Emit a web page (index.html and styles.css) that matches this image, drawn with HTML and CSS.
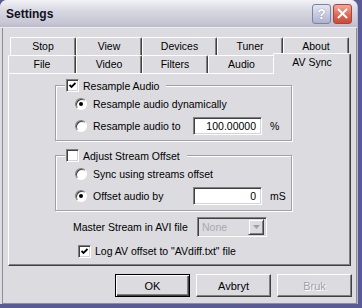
FILE: index.html
```html
<!DOCTYPE html>
<html lang="en">
<head>
    <meta charset="UTF-8">
    <title>Settings</title>
    <link rel="stylesheet" href="styles.css">
</head>
<body>
<div class="window">
    <div class="titlebar">
        <span class="title">Settings</span>
        <span class="caption-btn help">?</span>
        <span class="caption-btn close">
            <svg width="11" height="11" viewBox="0 0 11 11"><path d="M1.5 1.5 L9.5 9.5 M9.5 1.5 L1.5 9.5" stroke="#fff" stroke-width="2" stroke-linecap="round"/></svg>
        </span>
    </div>
    <div class="client">
        <div class="tabstrip">
            <div class="tab-row back">
                <div class="tab">Stop</div>
                <div class="tab">View</div>
                <div class="tab wide">Devices</div>
                <div class="tab">Tuner</div>
                <div class="tab">About</div>
            </div>
            <div class="tab-row front">
                <div class="tab first">File</div>
                <div class="tab">Video</div>
                <div class="tab">Filters</div>
                <div class="tab audio">Audio</div>
                <div class="tab selected">AV Sync</div>
            </div>
            <div class="panel">
                <div class="group">
                    <div class="legend">
                        <span class="check checked"><svg width="7" height="7" viewBox="0 0 7 7"><path d="M0.5 3 L2.5 5 L6.5 1" stroke="#000" stroke-width="1.8" fill="none"/></svg></span>
                        <span>Resample Audio</span>
                    </div>
                    <div class="row">
                        <span class="radio on"></span>
                        <span>Resample audio dynamically</span>
                    </div>
                    <div class="row">
                        <span class="radio"></span>
                        <span class="label">Resample audio to</span>
                        <span class="edit">100.00000</span>
                        <span class="unit">%</span>
                    </div>
                </div>
                <div class="group">
                    <div class="legend">
                        <span class="check"></span>
                        <span>Adjust Stream Offset</span>
                    </div>
                    <div class="row">
                        <span class="radio"></span>
                        <span>Sync using streams offset</span>
                    </div>
                    <div class="row">
                        <span class="radio on"></span>
                        <span class="label">Offset audio by</span>
                        <span class="edit">0</span>
                        <span class="unit">mS</span>
                    </div>
                </div>
                <div class="row master">
                    <span class="master-label">Master Stream in AVI file</span>
                    <span class="combo">
                        <span class="combo-text">None</span>
                        <span class="combo-btn"><svg width="7" height="4" viewBox="0 0 7 4"><path d="M0 0 H7 L3.5 4 Z" fill="#a0a0a0"/></svg></span>
                    </span>
                </div>
                <div class="row log">
                    <span class="check checked"><svg width="7" height="7" viewBox="0 0 7 7"><path d="M0.5 3 L2.5 5 L6.5 1" stroke="#000" stroke-width="1.8" fill="none"/></svg></span>
                    <span>Log AV offset to "AVdiff.txt" file</span>
                </div>
            </div>
        </div>
        <div class="buttons">
            <button class="btn default">OK</button>
            <button class="btn">Avbryt</button>
            <button class="btn disabled">Bruk</button>
        </div>
    </div>
</div>
</body>
</html>
```

FILE: styles.css
```css
body {
    margin: 0;
    background-color: #5a5a98; /* desktop behind the dialog */
    font-family: "Liberation Sans", Arial, sans-serif;
    font-size: 10.5px;
    color: #000;
}

.window {
    width: 358px;
    height: 304px;
    background-color: #dcdce0;
    border-radius: 7px 7px 0 0;
    display: flex;
    flex-direction: column;
    overflow: hidden;
    box-sizing: border-box;
    border-right: 1px solid #b8b8cc;
}

.titlebar {
    height: 28px;
    flex-shrink: 0;
    display: flex;
    align-items: center;
    padding: 0 5px 0 6px;
    background: linear-gradient(#f2f2f6, #dadae4 35%, #c8c8d6 80%, #bcbccc);
    border-bottom: 1px solid #ececf0;
    box-sizing: border-box;
}

.title {
    flex: 1;
    font-weight: bold;
    font-size: 12px;
    color: #101020;
    padding-top: 1px;
}

.caption-btn {
    width: 19px;
    height: 20px;
    margin-left: 2px;
    border-radius: 3px;
    box-sizing: border-box;
    display: flex;
    align-items: center;
    justify-content: center;
}

.help {
    background: linear-gradient(#e4e6f4, #aeb2cc);
    border: 1px solid #7c84a4;
    color: #fff;
    font-weight: bold;
    font-size: 14px;
    text-shadow: 0 0 1px #606888;
}

.close {
    background: linear-gradient(#f4a898, #dc6450 60%, #c84c3c);
    border: 1px solid #a8443c;
}

.client {
    flex: 1;
    margin-left: 2px;
    border-left: 1px solid #8c8c9c;
    border-bottom: 1px solid #8c8c9c;
    border-right: 1px solid #8c8c9c;
    padding: 9px 4px 0 5px;
    display: flex;
    flex-direction: column;
}

/* tabs */
.tab-row {
    display: flex;
    height: 18px;
}

.tab-row.back {
    margin-left: 2px;
}

.tab {
    width: 66px;
    height: 18px;
    box-sizing: border-box;
    border-top: 1px solid #fff;
    border-left: 1px solid #fff;
    border-right: 1px solid #404040;
    box-shadow: inset -1px 0 #808080;
    border-radius: 2px 2px 0 0;
    text-align: center;
    line-height: 17px;
}

.tab.wide {
    width: 75px;
}

.tab.first {
    width: 68px;
}

.tab.audio {
    width: 67px;
}

.tab.selected {
    width: 78px;
    height: 21px;
    margin: -2px -2px -1px -2px;
    background-color: #dcdce0;
    position: relative;
    line-height: 17px;
}

.panel {
    width: 343px;
    height: 193px;
    box-sizing: border-box;
    border: 1px solid;
    border-color: #fff #404040 #404040 #fff;
    box-shadow: inset -1px -1px #808080;
    padding: 11px 0 0 46px;
}

/* group boxes */
.group {
    position: relative;
    width: 237px;
    box-sizing: border-box;
    border: 1px solid #a0a0a8;
    box-shadow: 1px 1px 0 #fff, inset 1px 1px 0 #fff;
    padding: 8px 0 4px 19px;
    margin-bottom: 14px;
    display: flex;
    flex-direction: column;
    gap: 2px;
}

.group + .group {
    margin-bottom: 6px;
}

.legend {
    position: absolute;
    top: -7px;
    left: 9px;
    padding: 0 7px 0 1px;
    background-color: #dcdce0;
    display: flex;
    align-items: center;
    gap: 4px;
    height: 13px;
}

.row {
    display: flex;
    align-items: center;
    height: 20px;
}

.check {
    width: 13px;
    height: 13px;
    box-sizing: border-box;
    background-color: #fff;
    border: 1px solid;
    border-color: #808080 #fff #fff #808080;
    box-shadow: inset 1px 1px #404040, inset -1px -1px #d4d4d8;
    display: flex;
    align-items: center;
    justify-content: center;
    flex-shrink: 0;
}

.radio {
    width: 12px;
    height: 12px;
    box-sizing: border-box;
    border-radius: 50%;
    background-color: #fff;
    border: 1px solid;
    border-color: #808080 #fff #fff #808080;
    box-shadow: inset 1px 1px #404040;
    margin-right: 6px;
    display: flex;
    align-items: center;
    justify-content: center;
    flex-shrink: 0;
}

.radio.on::after {
    content: "";
    width: 4px;
    height: 4px;
    border-radius: 50%;
    background-color: #000;
}

.label {
    width: 100px;
}

.edit {
    width: 69px;
    height: 18px;
    box-sizing: border-box;
    background-color: #fff;
    border: 1px solid;
    border-color: #808080 #fff #fff #808080;
    box-shadow: inset 1px 1px #404040, inset -1px -1px #d4d4d8;
    text-align: right;
    padding-right: 5px;
    line-height: 16px;
}

.unit {
    margin-left: 8px;
}

.master {
    margin-left: 18px;
}

.master-label {
    width: 124px;
}

.combo {
    width: 70px;
    height: 20px;
    box-sizing: border-box;
    border: 1px solid;
    border-color: #808080 #fff #fff #808080;
    box-shadow: inset 1px 1px #404040, inset -1px -1px #d4d4d8;
    display: flex;
    align-items: center;
    padding: 2px;
}

.combo-text {
    flex: 1;
    color: #a8a8b0;
    padding-left: 2px;
}

.combo-btn {
    width: 16px;
    height: 16px;
    box-sizing: border-box;
    border: 1px solid;
    border-color: #dcdce0 #404040 #404040 #dcdce0;
    box-shadow: inset 1px 1px #fff, inset -1px -1px #808080;
    display: flex;
    align-items: center;
    justify-content: center;
}

.log {
    margin-top: 4px;
    margin-left: 23px;
    gap: 4px;
}

/* dialog buttons */
.buttons {
    display: flex;
    justify-content: flex-end;
    gap: 6px;
    margin-top: 8px;
}

.btn {
    width: 75px;
    height: 23px;
    padding: 0;
    font-family: inherit;
    font-size: 11px;
    color: #000;
    background-color: #dcdce0;
    border: 1px solid;
    border-color: #fff #404040 #404040 #fff;
    box-shadow: inset -1px -1px #808080;
}

.btn.default {
    border-color: #000;
    box-shadow: inset 1px 1px #fff, inset -1px -1px #404040, inset -2px -2px #808080;
}

.btn.disabled {
    color: #a0a0a8;
    text-shadow: 1px 1px #fff;
}
```
